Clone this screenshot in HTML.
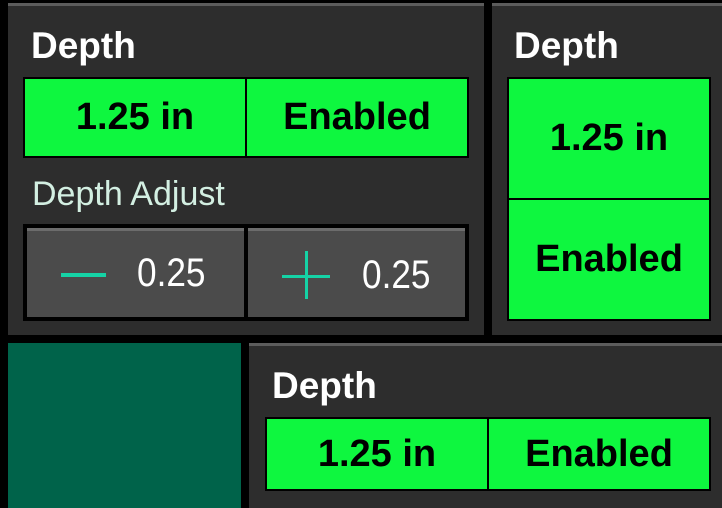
<!DOCTYPE html><html><head><style>
body{margin:0;width:722px;height:508px;background:#000;position:relative;overflow:hidden;font-family:"Liberation Sans",sans-serif}
.p{position:absolute;background:#2d2d2d;border-top:3px solid #5c5c5c;box-sizing:border-box}
.t{position:absolute;color:#fff;font-size:37px;font-weight:bold;line-height:40px}
.g{position:absolute;background:#0ef73f;border:2px solid #000;box-sizing:border-box;display:flex}
.g div{flex:1;display:flex;align-items:center;justify-content:center;font-weight:bold;font-size:38px;color:#000}
.b{position:absolute;background:#4b4b4b;border-top:3px solid #6c6c6c;box-sizing:border-box;color:#fff;font-size:40px}
.n{position:absolute;transform:scaleX(.88);transform-origin:left}
</style></head><body>
<div class="p" style="left:8px;top:3px;width:476px;height:332px"></div>
<div class="t" style="left:31px;top:26px">Depth</div>
<div class="g" style="left:23px;top:77px;width:446px;height:81px"><div style="border-right:2px solid #000">1.25 in</div><div>Enabled</div></div>
<div style="position:absolute;left:32px;top:175px;color:#d3efe2;font-size:34px;line-height:38px">Depth Adjust</div>
<div style="position:absolute;left:23px;top:224px;width:446px;height:97px;background:#000"></div>
<div class="b" style="left:27px;top:228px;width:217px;height:89px"><div style="position:absolute;left:34px;top:42px;width:45px;height:4px;background:#15d3a6"></div><div class="n" style="left:110px;top:20px">0.25</div></div>
<div class="b" style="left:248px;top:228px;width:217px;height:89px"><div style="position:absolute;left:34px;top:44px;width:48px;height:3px;background:#15d3a6"></div><div style="position:absolute;left:57px;top:20px;width:3px;height:48px;background:#15d3a6"></div><div class="n" style="left:114px;top:22px">0.25</div></div>
<div class="p" style="left:492px;top:3px;width:230px;height:332px"></div>
<div class="t" style="left:514px;top:26px">Depth</div>
<div class="g" style="left:507px;top:77px;width:204px;height:244px;flex-direction:column"><div style="border-bottom:2px solid #000">1.25 in</div><div>Enabled</div></div>
<div style="position:absolute;left:8px;top:343px;width:233px;height:165px;background:#00634a"></div>
<div class="p" style="left:249px;top:343px;width:473px;height:165px"></div>
<div class="t" style="left:272px;top:366px">Depth</div>
<div class="g" style="left:265px;top:417px;width:446px;height:74px"><div style="border-right:2px solid #000">1.25 in</div><div>Enabled</div></div>
</body></html>
